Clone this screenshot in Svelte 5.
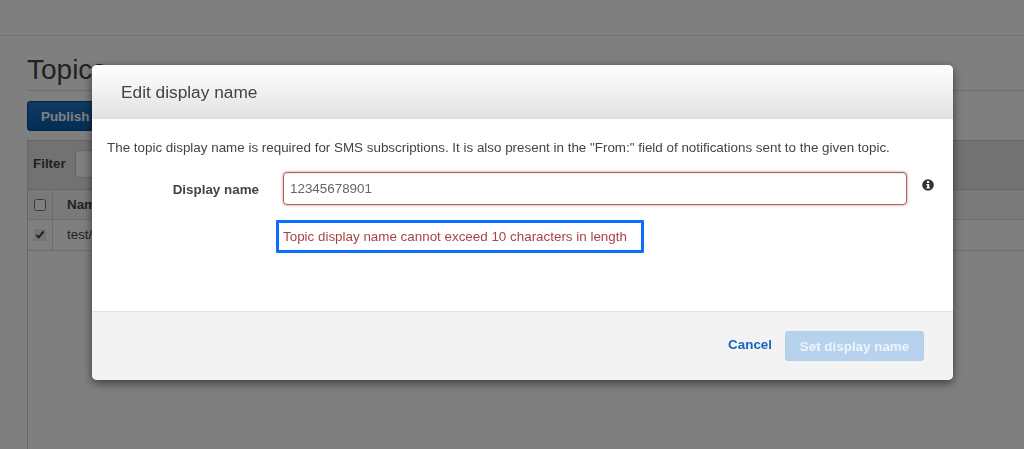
<script>
  let displayName = '12345678901';
</script>

<div class="page">
  <div class="topbar"></div>
  <div class="content">
    <h1>Topics</h1>
    <button class="publish">Publish</button>
    <div class="panel">
      <div class="filter">
        <span>Filter</span>
        <div class="filter-input"></div>
      </div>
      <div class="row head">
        <div class="check"><input type="checkbox" /></div>
        <div class="cell">Name</div>
      </div>
      <div class="row body-row">
        <div class="check"><input type="checkbox" checked /></div>
        <div class="cell">test/</div>
      </div>
    </div>
  </div>
</div>

<div class="backdrop">
  <div class="modal">
    <header>Edit display name</header>
    <section>
      <p>The topic display name is required for SMS subscriptions. It is also present in the "From:" field of notifications sent to the given topic.</p>
      <div class="field">
        <label for="dn">Display name</label>
        <input id="dn" type="text" bind:value={displayName} />
        <svg class="info" width="12" height="12" viewBox="0 0 12 12">
          <circle cx="6" cy="6" r="5.8" fill="#333" />
          <rect x="5" y="2" width="2.2" height="2" fill="#fff" />
          <path d="M4.4 5h2.8v3.3h.8v1.2H4.4V8.300h.8V6.200h-.8z" fill="#fff" />
        </svg>
      </div>
      <div class="error"><span>Topic display name cannot exceed 10 characters in length</span></div>
    </section>
    <footer>
      <span class="cancel">Cancel</span>
      <button class="submit" disabled>Set display name</button>
    </footer>
  </div>
</div>

<style>
  :global(body) {
    font-family: "Liberation Sans", Arial, sans-serif;
    background: #fff;
    overflow: hidden;
  }

  .page {
    height: 449px;
    color: #444;
    font-size: 13.4px;
  }

  .topbar {
    height: 35px;
    border-bottom: 1px solid #eaeaea;
  }

  .content {
    padding: 0 0 0 27px;
  }

  h1 {
    margin: 0;
    padding: 19px 0 5px;
    height: 30px;
    font-size: 28px;
    line-height: 30px;
    font-weight: 400;
    color: #444;
    border-bottom: 1px solid #ddd;
  }

  .publish {
    display: block;
    margin: 10px 0 9px;
    width: 120px;
    height: 30px;
    padding: 0 0 0 13px;
    border: 1px solid #0a4a8c;
    border-radius: 3px;
    background: linear-gradient(#1b74c5, #0b5aa8);
    color: #fff;
    font: bold 13.4px "Liberation Sans", Arial, sans-serif;
    text-align: left;
  }

  .panel {
    height: 320px;
    border: 1px solid #ccc;
    border-right: 0;
  }

  .filter {
    box-sizing: border-box;
    display: flex;
    align-items: center;
    gap: 9px;
    height: 49px;
    padding: 0 0 3px 5px;
    background: #e4e4e4;
    border-bottom: 1px solid #ccc;
    font-weight: bold;
  }

  .filter-input {
    width: 300px;
    height: 26px;
    background: #fff;
    border: 1px solid #ccc;
    border-radius: 3px;
  }

  .row {
    box-sizing: border-box;
    display: flex;
    align-items: center;
    border-bottom: 1px solid #ddd;
  }

  .head {
    height: 30px;
    font-weight: bold;
    background: #f5f5f5;
  }

  .body-row {
    height: 31px;
  }

  .body-row .cell {
    padding-bottom: 2px;
  }

  .check {
    width: 24px;
    height: 100%;
    display: flex;
    align-items: center;
    justify-content: center;
    border-right: 1px solid #ddd;
  }

  .check input {
    margin: 0;
    width: 12px;
    height: 12px;
    accent-color: #e8e8e8;
  }

  .cell {
    padding-left: 14px;
  }

  .backdrop {
    position: fixed;
    inset: 0;
    background: rgba(0, 0, 0, 0.5);
    padding: 65px 71px 0 92px;
  }

  .modal {
    height: 315px;
    display: flex;
    flex-direction: column;
    background: #fff;
    border-radius: 5px;
    box-shadow: 0 3px 10px rgba(0, 0, 0, 0.55);
    overflow: hidden;
    color: #444;
  }

  header {
    flex: none;
    height: 53px;
    padding-left: 29px;
    line-height: 55px;
    font-size: 17.3px;
    color: #444;
    background: linear-gradient(#fff, #e2e2e2);
    border-bottom: 1px solid #ddd;
  }

  section {
    flex: 1;
    padding: 0 15px;
  }

  p {
    margin: 20px 0 0;
    font-size: 13.4px;
    line-height: 18px;
    white-space: nowrap;
  }

  .field {
    display: flex;
    align-items: flex-start;
    margin-top: 15px;
  }

  label {
    width: 152px;
    padding-top: 9px;
    text-align: right;
    font-size: 13.4px;
    font-weight: bold;
    line-height: 18px;
  }

  input[type='text'] {
    box-sizing: border-box;
    width: 624px;
    height: 33px;
    margin-left: 24px;
    padding: 0 6px;
    border: 1px solid #b0605e;
    border-radius: 4px;
    box-shadow: inset 0 1px 1px rgba(0, 0, 0, 0.075), 0 0 3px rgba(169, 68, 66, 0.6);
    outline: none;
    color: #666;
    font: 13.4px "Liberation Sans", Arial, sans-serif;
  }

  .info {
    margin: 7px 0 0 15px;
  }

  .error {
    box-sizing: border-box;
    width: 368px;
    height: 33px;
    margin: 15px 0 0 169px;
    padding: 0 0 0 4px;
    border: 3px solid #0d6efd;
    border-radius: 1px;
    color: #a94442;
    font-size: 13.4px;
    line-height: 27px;
    white-space: nowrap;
  }

  footer {
    flex: none;
    box-sizing: border-box;
    height: 69px;
    display: flex;
    justify-content: flex-end;
    align-items: flex-start;
    gap: 13px;
    padding: 19px 29px 0 0;
    background: #f3f3f3;
    border-top: 1px solid #e2e2e2;
  }

  .cancel {
    margin-top: 5px;
    font-size: 13.4px;
    font-weight: bold;
    line-height: 18px;
    color: #1a63c2;
  }

  .submit {
    width: 139px;
    height: 30px;
    padding: 0;
    border: 1px solid #b3cfe8;
    border-radius: 3px;
    background: #b6d2ec;
    color: #eef4fb;
    font: bold 13.4px "Liberation Sans", Arial, sans-serif;
  }
</style>
